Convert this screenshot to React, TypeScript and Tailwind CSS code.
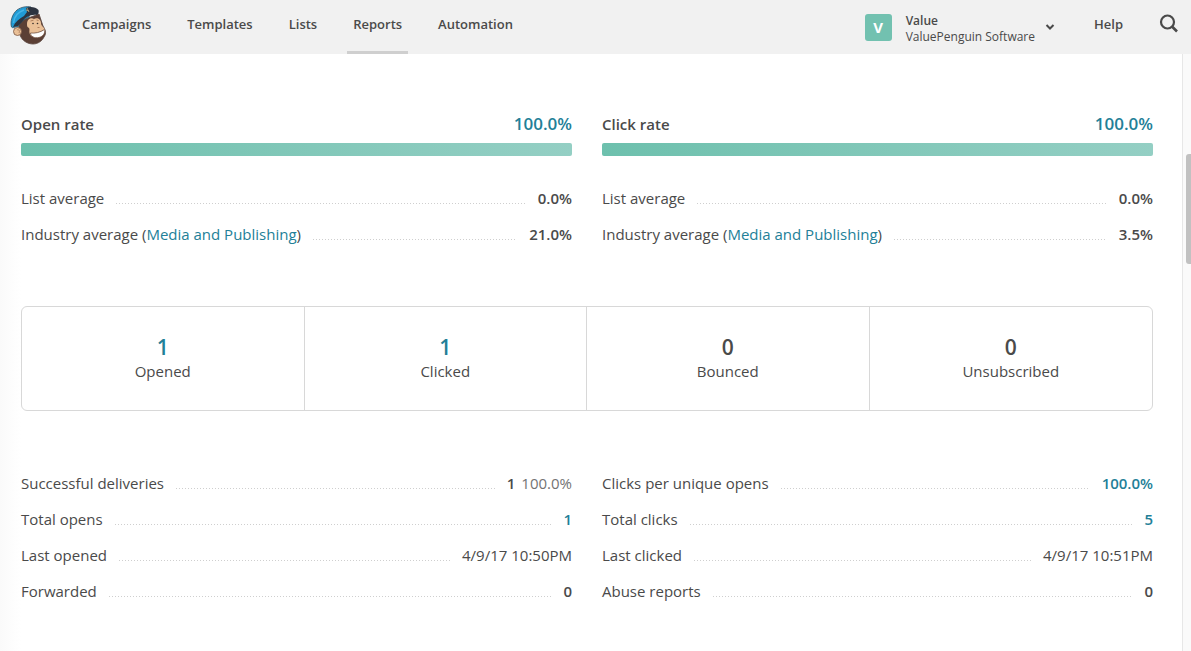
import React from "react";

type Metric = { label: React.ReactNode; value: React.ReactNode };

const link = "text-[#237f98]";

function Logo() {
  return (
    <svg viewBox="0 0 44 46" className="h-[46px] w-11" aria-hidden="true">
      <path d="M14 19C12 24 13 30 14 33C16 39 22 42 27 42C32 42 36 39 38 35C41 31 39 27 37 24L33 12Z" fill="#5b3f35" stroke="#5a453d" strokeWidth="0.800" />
      <path d="M21 22C21 17 25 15 28 17C31 15 35 17 35 21C35 24 38 25 39 28C39 32 35 35 31 35C27 36 24 34 23.500 31C23 29 24 27 23 26C21 25 21 24 21 22Z" fill="#eac097" />
      <path d="M24.500 31C29 31.500 34 30.500 38.500 27.500C39.500 31 37 34.500 33 35.500C28.500 36.500 24.500 34.500 24.500 31Z" fill="#fff" stroke="#71503f" strokeWidth="0.800" />
      <path d="M5.500 25C4 20 6 12 11 8C15 5 21 4 25 5L23 15C18 17 14 20 12 25C10 24 7 27 5.500 25Z" fill="#219bd5" stroke="#315063" strokeWidth="0.800" />
      <path d="M20 6C24 4 30 5 32.500 8C33 10 32.500 12 31 13C25 12 19 15 16 20L12 24L7 25C9 20 13 17 18 14L21 10Z" fill="#2d3440" />
      <path d="M7.500 21C8 15 12 10 18 8" fill="none" stroke="#46b4e6" strokeWidth="1.500" />
      <path d="M20 8l3 1M21 6l2 4" stroke="#b9a77d" strokeWidth="0.800" />
      <circle cx="11.500" cy="29.500" r="4" fill="#eac097" stroke="#795642" strokeWidth="0.800" />
      <path d="M11 28c2-1 3 1 2 3" fill="none" stroke="#a87958" strokeWidth="0.800" />
      <path d="M24.500 19l3-0.800M30.500 18l2 .500M31.500 25.500l2 0" stroke="#a06f51" strokeWidth="0.800" />
      <circle cx="27" cy="21.500" r="0.800" fill="#352c29" />
      <circle cx="31.500" cy="21.500" r="0.800" fill="#352c29" />
    </svg>
  );
}

function Row({ label, value }: Metric) {
  return (
    <div className="flex h-9 items-center gap-3">
      <dt>{label}</dt>
      <div className="mt-2.5 h-px flex-1 bg-[repeating-linear-gradient(90deg,#cfcfcf_0_1px,transparent_1px_3px)]" />
      <dd className="flex gap-1.5">{value}</dd>
    </div>
  );
}

function Rate({ title, rows }: { title: string; rows: Metric[] }) {
  return (
    <section>
      <div className="flex h-6 items-center justify-between">
        <h2 className="font-semibold">{title}</h2>
        <a href="#rate" className={`text-[17px] font-semibold ${link}`}>100.0%</a>
      </div>
      <div className="mt-[7px] mb-6 h-[13px] rounded-[2px] bg-linear-to-r from-[#6dc0ad] to-[#94cfc4]" />
      <dl>{rows.map((row, i) => <Row key={i} {...row} />)}</dl>
    </section>
  );
}

const strong = (text: string) => <span className="font-semibold">{text}</span>;
const strongLink = (text: string) => <a href="#details" className={`font-semibold ${link}`}>{text}</a>;

const averages = (industry: string): Metric[] => [
  { label: "List average", value: strong("0.0%") },
  { label: <>Industry average (<a href="#industry" className={link}>Media and Publishing</a>)</>, value: strong(industry) },
];

const opens: Metric[] = [
  { label: "Successful deliveries", value: <>{strong("1")}<span className="text-[#737373]">100.0%</span></> },
  { label: "Total opens", value: strongLink("1") },
  { label: "Last opened", value: "4/9/17 10:50PM" },
  { label: "Forwarded", value: strong("0") },
];

const clicks: Metric[] = [
  { label: "Clicks per unique opens", value: strongLink("100.0%") },
  { label: "Total clicks", value: strongLink("5") },
  { label: "Last clicked", value: "4/9/17 10:51PM" },
  { label: "Abuse reports", value: strong("0") },
];

const totals = [
  { count: "1", label: "Opened", linked: true },
  { count: "1", label: "Clicked", linked: true },
  { count: "0", label: "Bounced", linked: false },
  { count: "0", label: "Unsubscribed", linked: false },
];

const nav = ["Campaigns", "Templates", "Lists", "Reports", "Automation"];

export default function App() {
  return (
    <div className="flex min-h-screen flex-col bg-white font-['Open_Sans',sans-serif] text-[15px] text-[#4a4a4a]">
      <header className="flex h-[54px] justify-between bg-[#f1f1f1] pr-3 pl-1.5 text-[13px] font-semibold">
        <div className="flex">
          <a href="#home" aria-label="Home" className="pt-0.5"><Logo /></a>
          <nav className="ml-[26px] flex gap-6">
            {nav.map((item) => (
              <a
                key={item}
                href={`#${item.toLowerCase()}`}
                className={`border-b-3 px-1.5 pt-3.5 leading-5 ${item === "Reports" ? "border-[#cfcfcf]" : "border-transparent"}`}
              >
                {item}
              </a>
            ))}
          </nav>
        </div>
        <div className="flex">
          <button type="button" className="flex h-[54px] items-center text-left">
            <span className="flex size-[27px] items-center justify-center rounded-[3px] bg-[#72c1b0] text-[15px] font-bold text-white">V</span>
            <span className="mt-1 ml-3.5 flex flex-col text-xs leading-4">
              <span>Value</span>
              <span className="font-normal">ValuePenguin Software</span>
            </span>
            <svg viewBox="0 0 10 8" className="ml-2.5 h-2 w-2.5" aria-hidden="true">
              <path d="M1.500 2L5 5.500L8.500 2" fill="none" stroke="#4a4a4a" strokeWidth="2" />
            </svg>
          </button>
          <a href="#help" className="ml-[39px] pt-3.5 leading-5">Help</a>
          <button type="button" aria-label="Search" className="ml-9 flex h-12 items-center">
            <svg viewBox="0 0 20 20" className="size-5" fill="none" stroke="#4a4a4a" aria-hidden="true">
              <circle cx="8.500" cy="8" r="6.500" strokeWidth="2.200" />
              <path d="M13 12.500L18 17.500" strokeWidth="2.600" />
            </svg>
          </button>
        </div>
      </header>
      <div className="flex flex-1">
        <main className="flex-1 bg-linear-to-r from-[#fafafa] to-white to-[21px] pt-[58px] pr-[29px] pb-10 pl-[21px]">
          <div className="grid grid-cols-2 gap-x-[30px]">
            <Rate title="Open rate" rows={averages("21.0%")} />
            <Rate title="Click rate" rows={averages("3.5%")} />
          </div>
          <ul className="mt-[54px] grid h-[105px] grid-cols-4 divide-x divide-[#d8d8d8] rounded-md border border-[#d8d8d8]">
            {totals.map(({ count, label, linked }) => (
              <li key={label} className="flex flex-col items-center justify-center">
                {linked
                  ? <a href={`#${label.toLowerCase()}`} className={`text-[21px] leading-6 font-semibold ${link}`}>{count}</a>
                  : <span className="text-[21px] leading-6 font-semibold">{count}</span>}
                <span className="leading-6">{label}</span>
              </li>
            ))}
          </ul>
          <div className="mt-[54px] grid grid-cols-2 gap-x-[30px]">
            <dl>{opens.map((row, i) => <Row key={i} {...row} />)}</dl>
            <dl>{clicks.map((row, i) => <Row key={i} {...row} />)}</dl>
          </div>
        </main>
        <aside className="flex w-[9px] flex-col items-end border-l border-[#e7e7e7] bg-[#fafafa] pt-[100px]">
          <div className="h-[110px] w-[5px] rounded-l-[3px] bg-[#c1c1c1]" />
        </aside>
      </div>
    </div>
  );
}
